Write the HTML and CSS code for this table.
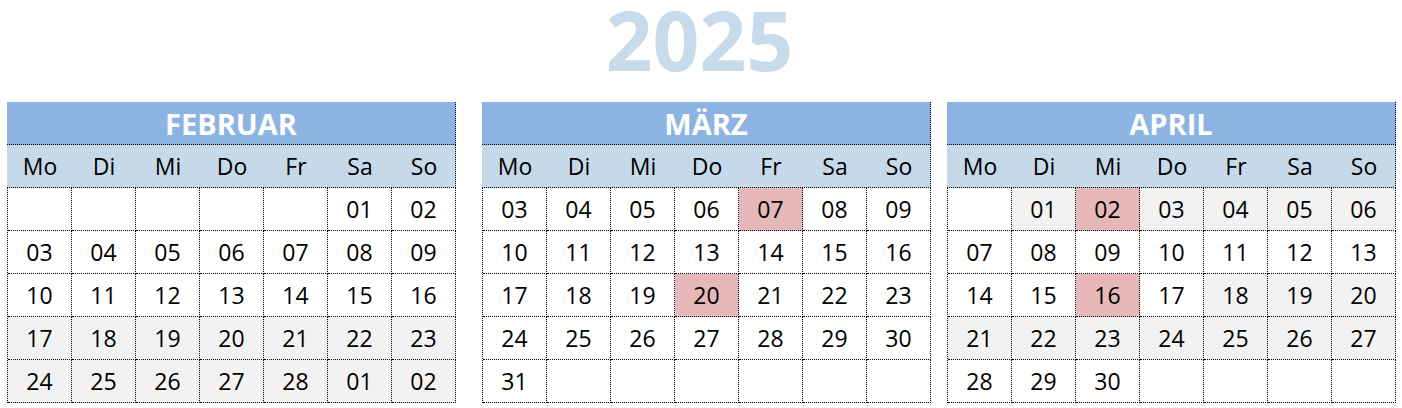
FILE: index.html
```html
<!DOCTYPE html>
<html lang="de">
<head>
<meta charset="utf-8">
<title>Kalender 2025</title>
<link rel="stylesheet" href="styles.css">
</head>
<body>
<div class="page">
  <div class="year">2025</div>
  <div class="months">
    <section class="month month-feb">
      <div class="mname">FEBRUAR</div>
      <div class="wdays"><span>Mo</span><span>Di</span><span>Mi</span><span>Do</span><span>Fr</span><span>Sa</span><span>So</span></div>
      <div class="days">
        <div class="d"></div><div class="d"></div><div class="d"></div><div class="d"></div><div class="d"></div><div class="d">01</div><div class="d">02</div>
        <div class="d">03</div><div class="d">04</div><div class="d">05</div><div class="d">06</div><div class="d">07</div><div class="d">08</div><div class="d">09</div>
        <div class="d">10</div><div class="d">11</div><div class="d">12</div><div class="d">13</div><div class="d">14</div><div class="d">15</div><div class="d">16</div>
        <div class="d g">17</div><div class="d g">18</div><div class="d g">19</div><div class="d g">20</div><div class="d g">21</div><div class="d g">22</div><div class="d g">23</div>
        <div class="d g">24</div><div class="d g">25</div><div class="d g">26</div><div class="d g">27</div><div class="d g">28</div><div class="d g">01</div><div class="d g">02</div>
      </div>
    </section>
    <section class="month">
      <div class="mname">MÄRZ</div>
      <div class="wdays"><span>Mo</span><span>Di</span><span>Mi</span><span>Do</span><span>Fr</span><span>Sa</span><span>So</span></div>
      <div class="days">
        <div class="d">03</div><div class="d">04</div><div class="d">05</div><div class="d">06</div><div class="d r">07</div><div class="d">08</div><div class="d">09</div>
        <div class="d">10</div><div class="d">11</div><div class="d">12</div><div class="d">13</div><div class="d">14</div><div class="d">15</div><div class="d">16</div>
        <div class="d">17</div><div class="d">18</div><div class="d">19</div><div class="d r">20</div><div class="d">21</div><div class="d">22</div><div class="d">23</div>
        <div class="d">24</div><div class="d">25</div><div class="d">26</div><div class="d">27</div><div class="d">28</div><div class="d">29</div><div class="d">30</div>
        <div class="d">31</div><div class="d"></div><div class="d"></div><div class="d"></div><div class="d"></div><div class="d"></div><div class="d"></div>
      </div>
    </section>
    <section class="month">
      <div class="mname">APRIL</div>
      <div class="wdays"><span>Mo</span><span>Di</span><span>Mi</span><span>Do</span><span>Fr</span><span>Sa</span><span>So</span></div>
      <div class="days">
        <div class="d"></div><div class="d g">01</div><div class="d r">02</div><div class="d g">03</div><div class="d g">04</div><div class="d g">05</div><div class="d g">06</div>
        <div class="d">07</div><div class="d">08</div><div class="d">09</div><div class="d">10</div><div class="d">11</div><div class="d">12</div><div class="d">13</div>
        <div class="d">14</div><div class="d">15</div><div class="d r">16</div><div class="d">17</div><div class="d g">18</div><div class="d g">19</div><div class="d g">20</div>
        <div class="d g">21</div><div class="d g">22</div><div class="d g">23</div><div class="d g">24</div><div class="d g">25</div><div class="d g">26</div><div class="d g">27</div>
        <div class="d">28</div><div class="d">29</div><div class="d">30</div><div class="d"></div><div class="d"></div><div class="d"></div><div class="d"></div>
      </div>
    </section>
  </div>
</div>
</body>
</html>
```

FILE: styles.css
```css
* { box-sizing: border-box; }

html, body {
  margin: 0;
  padding: 0;
  background: #ffffff;
}

.page {
  width: 1402px;
  height: 408px;
  overflow: hidden;
  font-family: "Open Sans", "DejaVu Sans", sans-serif;
  color: #000;
}

.year {
  height: 102px;
  padding-right: 3px;
  text-align: center;
  font-size: 82px;
  font-weight: 700;
  line-height: 78px;
  color: #c8dbea;
}

.months {
  display: flex;
  gap: 16px;
  padding-left: 7px;
}

.month {
  width: 449px;
}

.month-feb {
  margin-right: 10px;
}

.mname {
  height: 43px;
  background: #8db3e2;
  color: #ffffff;
  font-size: 29px;
  font-weight: 700;
  display: flex;
  align-items: center;
  justify-content: center;
  border-bottom: 1px dotted #000;
  border-right: 1px dotted #000;
}

.wdays {
  height: 43px;
  background: #c6d9e8;
  display: grid;
  grid-template-columns: repeat(7, 64px);
  border-bottom: 1px dotted #000;
  border-right: 1px dotted #000;
  padding-left: 1px;
}

.wdays span {
  display: flex;
  align-items: center;
  justify-content: center;
  font-size: 23px;
}

.days {
  display: grid;
  grid-template-columns: repeat(7, 64px);
  border-left: 1px dotted #000;
}

.d {
  height: 43px;
  border-right: 1px dotted #000;
  border-bottom: 1px dotted #000;
  display: flex;
  align-items: center;
  justify-content: center;
  font-size: 23px;
  background: #ffffff;
}

.d.g { background: #f2f2f2; }
.d.r { background: #e6b8b7; }
```
